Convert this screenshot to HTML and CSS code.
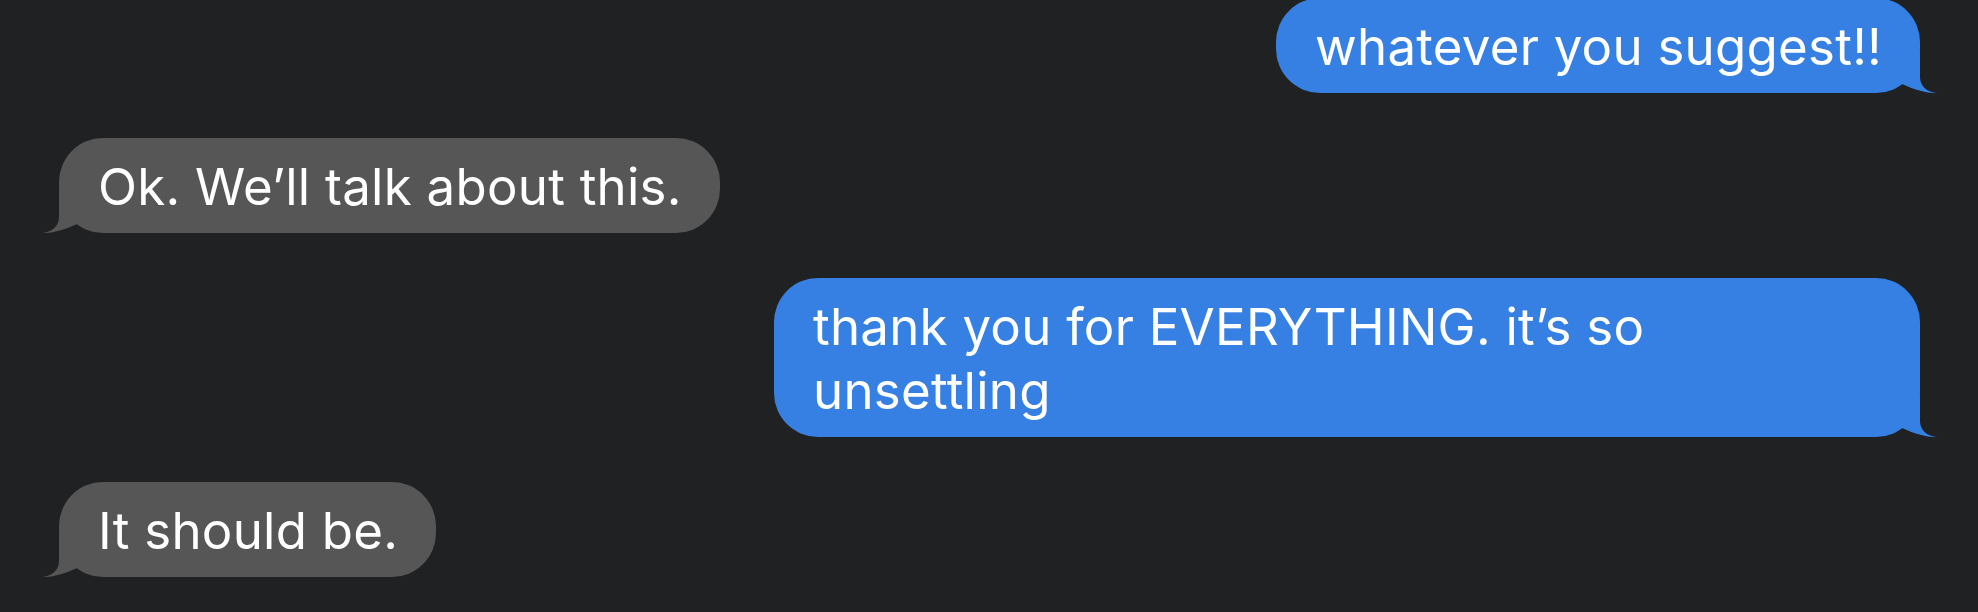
FILE: index.html
```html
<!DOCTYPE html>
<html lang="en">
<head>
<meta charset="utf-8">
<title>Messages</title>
<link rel="stylesheet" href="styles.css">
</head>
<body>
<main class="thread">
  <div class="bubble sent">
    <span class="text">whatever you suggest!!</span>
    <svg class="tail" viewBox="0 0 40 46" aria-hidden="true"><path d="M20 4 L20 30 C20 40 28 45 37 46 C28 46.5 14 43 2 37 L2 4 Z"/></svg>
  </div>
  <div class="bubble received">
    <span class="text">Ok. We’ll talk about this.</span>
    <svg class="tail" viewBox="0 0 40 46" aria-hidden="true"><path d="M20 4 L20 30 C20 40 28 45 37 46 C28 46.5 14 43 2 37 L2 4 Z"/></svg>
  </div>
  <div class="bubble sent wide">
    <span class="text">thank you for EVERYTHING. it’s so<br>unsettling</span>
    <svg class="tail" viewBox="0 0 40 46" aria-hidden="true"><path d="M20 4 L20 30 C20 40 28 45 37 46 C28 46.5 14 43 2 37 L2 4 Z"/></svg>
  </div>
  <div class="bubble received">
    <span class="text">It should be.</span>
    <svg class="tail" viewBox="0 0 40 46" aria-hidden="true"><path d="M20 4 L20 30 C20 40 28 45 37 46 C28 46.5 14 43 2 37 L2 4 Z"/></svg>
  </div>
</main>
</body>
</html>
```
FILE: styles.css
```css
html, body {
  margin: 0;
  padding: 0;
  background: #202123;
  height: 100%;
  overflow: hidden;
}

.thread {
  display: flex;
  flex-direction: column;
  gap: 45px;
  margin-top: -2px;
  padding: 0 58px 0 59px;
  font-family: "Inter", "Noto Sans", "Liberation Sans", sans-serif;
  font-size: 51px;
  letter-spacing: 0.25px;
  line-height: 64px;
  color: #ffffff;
}

.bubble {
  position: relative;
  box-sizing: border-box;
  max-width: 1146px;
  padding: 17px 38px 14px 39px;
  border-radius: 44px;
}

.bubble .text {
  display: block;
  white-space: nowrap;
}

.sent {
  align-self: flex-end;
  background: #367fe3;
  fill: #367fe3;
}

.received {
  align-self: flex-start;
  background: #565656;
  fill: #565656;
}

.wide {
  width: 1146px;
}

.tail {
  position: absolute;
  bottom: 0;
  width: 40px;
  height: 46px;
  display: block;
}

.sent .tail {
  right: -20px;
}

.received .tail {
  left: -20px;
  transform: scaleX(-1);
}
```
